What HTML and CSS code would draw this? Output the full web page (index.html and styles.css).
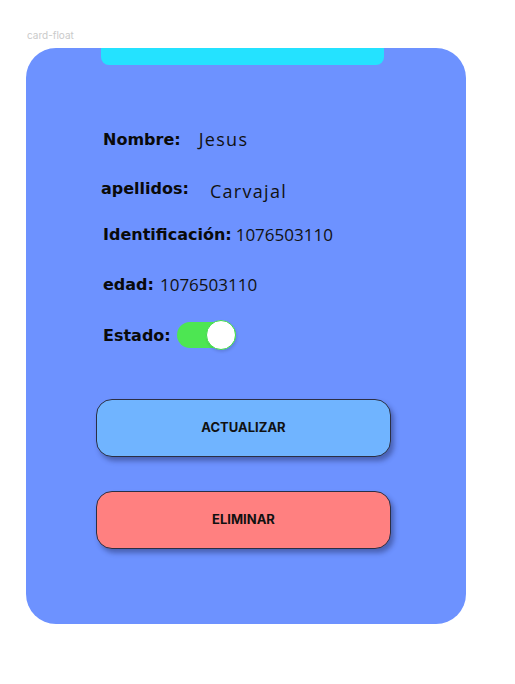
FILE: index.html
```html
<!DOCTYPE html>
<html>
<head>
<meta charset="utf-8">
<link rel="stylesheet" href="styles.css">
</head>
<body>
<div class="frame-label">card-float</div>
<div class="card">
  <div class="card-bar"></div>
  <div class="fields">
    <div class="row row-nombre"><span class="label">Nombre:</span><span class="value word">Jesus</span></div>
    <div class="row row-apellidos"><span class="label">apellidos:</span><span class="value word">Carvajal</span></div>
    <div class="row row-id"><span class="label">Identificación:</span><span class="value">1076503110</span></div>
    <div class="row row-edad"><span class="label">edad:</span><span class="value">1076503110</span></div>
    <div class="row row-estado"><span class="label">Estado:</span><span class="toggle"><span class="knob"></span></span></div>
  </div>
  <div class="actions">
    <button class="btn btn-update">ACTUALIZAR</button>
    <button class="btn btn-delete">ELIMINAR</button>
  </div>
</div>
</body>
</html>
```
FILE: styles.css
```css
html, body {
  margin: 0;
  padding: 0;
  background: #ffffff;
}
body {
  font-family: "Open Sans", sans-serif;
  color: #0d0d0d;
  width: 515px;
  height: 684px;
  overflow: hidden;
}
.frame-label {
  font-family: Inter, sans-serif;
  font-size: 10px;
  color: #cacaca;
  line-height: 12px;
  padding: 29px 0 0 27px;
  height: 19px;
}
.card {
  margin-left: 26px;
  width: 440px;
  height: 576px;
  background: #6d92ff;
  border-radius: 30px;
  box-sizing: border-box;
  display: flex;
  flex-direction: column;
}
.card-bar {
  margin-left: 75px;
  width: 283px;
  height: 17px;
  background: #24e2ff;
  border-radius: 0 0 8px 8px;
}
.fields {
  display: flex;
  flex-direction: column;
  padding-left: 77px;
}
.row {
  display: flex;
  align-items: center;
  height: 24px;
}
.label {
  font-family: "DejaVu Sans", sans-serif;
  font-weight: 700;
  font-size: 16px;
  color: #0a0a0a;
}
.value {
  font-size: 17px;
  color: #111111;
}
.value.word { font-size: 18px; letter-spacing: 1.3px; }
.row-nombre { margin-top: 62px; }
.row-nombre .value { margin-left: 18px; }
.row-apellidos { margin-top: 26px; margin-left: -2px; }
.row-apellidos .label { position: relative; top: -1px; }
.row-apellidos .value { margin-left: 21px; position: relative; top: 2px; }
.row-id { margin-top: 21px; }
.row-id .value { margin-left: 4px; }
.row-edad { margin-top: 26px; }
.row-edad .value { margin-left: 6px; }
.row-estado { margin-top: 24px; height: 30px; }
.toggle {
  margin-left: 6px;
  width: 59px;
  height: 26px;
  border-radius: 13px;
  background: #4de652;
  display: flex;
  justify-content: flex-end;
  align-items: center;
}
.knob {
  width: 30px;
  height: 30px;
  border-radius: 50%;
  background: #ffffff;
  border: 1px solid #3fdc4a;
  box-sizing: border-box;
  box-shadow: 1px 2px 3px rgba(0,0,0,0.12);
}
.actions {
  display: flex;
  flex-direction: column;
  gap: 34px;
  padding-left: 70px;
  margin-top: 49px;
}
.btn {
  width: 295px;
  height: 58px;
  border: 1px solid #2b2f45;
  border-radius: 16px;
  font-family: Inter, sans-serif;
  font-weight: 700;
  font-size: 13px;
  color: #111111;
  box-shadow: 3px 4px 5px rgba(30,40,90,0.45);
  padding: 0 0 2px;
}
.btn-update { background: #70b4ff; }
.btn-delete { background: #ff8080; }
```
